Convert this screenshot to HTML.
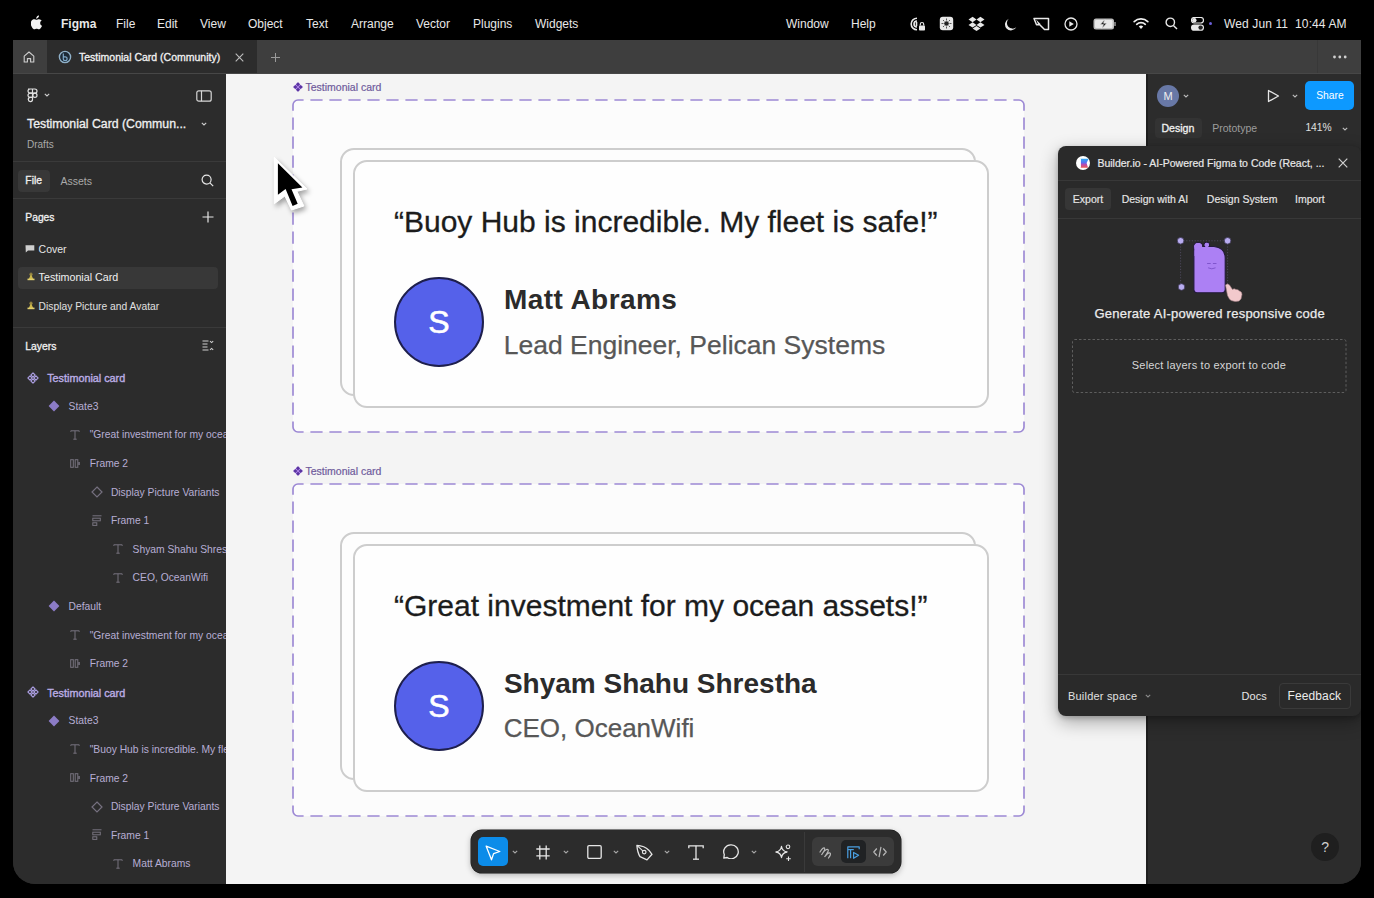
<!DOCTYPE html>
<html><head><meta charset="utf-8">
<style>
*{margin:0;padding:0;box-sizing:border-box}
html,body{width:1374px;height:898px;overflow:hidden;background:#000;font-family:"Liberation Sans",sans-serif}
.a{position:absolute;white-space:nowrap}
.a>svg{display:block}
#menubar .m{position:absolute;top:16.7px;font-size:12px;color:#e8e8e8;line-height:14px}
#win{position:absolute;left:13px;top:40px;width:1348px;height:844px;border-radius:0 0 22px 22px;overflow:hidden;background:#2c2c2c}
#tabbar{position:absolute;left:0;top:0;width:1348px;height:34px;background:#3e3e3e;border-bottom:1px solid #474747}
#sidebar{position:absolute;left:0;top:34px;width:213px;height:810px;background:#2c2c2c;overflow:hidden}
#canvas{position:absolute;left:213px;top:34px;width:920px;height:810px;background:#f4f4f4;overflow:hidden}
#rpanel{position:absolute;left:1133px;top:34px;width:215px;height:810px;background:#2c2c2c}
.sep{position:absolute;left:0;height:1px;background:#3a3a3a}
.st{position:absolute;font-size:10.5px;color:#e6e6e6;line-height:12px}
.lbl{position:absolute;left:67px;width:120px;height:14px;font-size:10.5px;line-height:14px;color:#6f5b9c;-webkit-text-stroke:0.2px #6f5b9c}
.frame{position:absolute;left:67px;width:731px;height:332px}
.card{position:absolute;border:2px solid #cdcdcd;border-radius:14px;background:#fdfdfd}
.back{left:114px;width:636px;height:248px}
.front{left:126.5px;width:636.5px;height:248.2px;background:#fefefe}
.avatar{position:absolute;left:168px;width:90px;height:90px;border-radius:50%;background:#5561ea;border:2px solid #1e1f4d;color:#fff;font-size:32px;line-height:87px;text-align:center;-webkit-text-stroke:0.6px #fff}
.quote{position:absolute;left:168px;margin-top:1px;font-size:30px;line-height:30px;color:#1c1c1c;white-space:nowrap;-webkit-text-stroke:0.3px #1c1c1c}
.name{position:absolute;left:277.9px;font-size:28px;line-height:28px;font-weight:700;color:#2b2b2b;white-space:nowrap}
.role{position:absolute;left:277.7px;font-size:26.5px;line-height:26px;color:#575757;white-space:nowrap;-webkit-text-stroke:0.25px #575757}
.ly{position:absolute;font-size:10.3px;line-height:12px;color:#b7aed4;white-space:nowrap}
.lyb{position:absolute;font-size:10.8px;line-height:12px;color:#bcaee6;white-space:nowrap;-webkit-text-stroke:0.35px #bcaee6}
#builder{position:absolute;left:1044.8px;top:105.6px;width:303.2px;height:570.4px;background:#2a2a2a;border-radius:8px;box-shadow:0 6px 18px rgba(0,0,0,0.32),0 2px 5px rgba(0,0,0,0.2)}
#toolbar{position:absolute;left:471.3px;top:830.4px;width:429.7px;height:42.4px;border-radius:11px;background:#2c2c2c;box-shadow:0 0 0 0.5px #1a1a1a,0 2px 6px rgba(0,0,0,0.28)}
.sb{-webkit-text-stroke:0.3px currentColor}
</style></head><body>
<div id="menubar">
  <svg class="a" style="left:31px;top:15px" width="12" height="15" viewBox="0 0 170 200"><path fill="#f2f2f2" d="M150.4 155.8c-2.8 6.4-6.1 12.3-9.9 17.8-5.2 7.4-9.5 12.6-12.8 15.4-5.1 4.7-10.6 7.1-16.5 7.3-4.2 0-9.3-1.2-15.3-3.7-6-2.4-11.4-3.6-16.4-3.6-5.3 0-10.9 1.2-16.9 3.6-6 2.5-10.9 3.7-14.5 3.9-5.7.2-11.3-2.3-16.9-7.5-3.6-3.1-8.1-8.5-13.4-16.1C11.8 164.8 7 155.4 3.2 144.5-.9 132.8-3 121.4-3 110.4c0-12.6 2.7-23.5 8.2-32.6 4.3-7.3 10-13.1 17.1-17.4 7.1-4.3 14.8-6.4 23.1-6.6 4.5 0 10.5 1.4 17.9 4.2 7.4 2.8 12.2 4.2 14.3 4.2 1.6 0 6.9-1.7 16-5 8.6-3.1 15.8-4.4 21.8-3.9 16.1 1.3 28.2 7.7 36.2 19.1-14.4 8.7-21.5 20.9-21.4 36.6.1 12.2 4.6 22.4 13.3 30.5 3.9 3.7 8.3 6.6 13.2 8.6-1.1 3.1-2.2 6.1-3.4 9zM113.5 3.8c0 9.6-3.5 18.5-10.5 26.8-8.4 9.8-18.6 15.5-29.6 14.6-.1-1.2-.2-2.4-.2-3.7 0-9.2 4-19.1 11.2-27.2 3.6-4.1 8.1-7.5 13.6-10.3 5.5-2.7 10.7-4.2 15.6-4.5.1 1.4.2 2.8.2 4.2z"/></svg>
  <svg class="a" style="left:909px;top:16px" width="17" height="16" viewBox="0 0 17 16"><g fill="none" stroke="#e8e8e8" stroke-width="1.6"><path d="M8 2.2A5.8 5.8 0 1 0 8 13.8"/><path d="M8 5A3 3 0 1 0 8 11"/></g><path d="M7.5 6V10" stroke="#e8e8e8" stroke-width="1.6"/><rect x="10" y="9.5" width="6" height="5" rx="0.8" fill="#e8e8e8"/><path d="M11.3 9.5V8.2A1.7 1.7 0 0 1 14.7 8.2V9.5" fill="none" stroke="#e8e8e8" stroke-width="1.2"/></svg>
  <svg class="a" style="left:939px;top:16px" width="15" height="15" viewBox="0 0 15 15"><rect x="0.8" y="0.8" width="13.4" height="13.4" rx="3" fill="#e8e8e8"/><circle cx="7.5" cy="7.5" r="2.3" fill="#222"/><g stroke="#333" stroke-width="0.8"><path d="M7.5 2.5V4.5M7.5 10.5V12.5M2.5 7.5H4.5M10.5 7.5H12.5M4 4L5.3 5.3M9.7 9.7L11 11M11 4L9.7 5.3M5.3 9.7L4 11"/></g></svg>
  <svg class="a" style="left:968px;top:16px" width="17" height="15" viewBox="0 0 17 15"><g fill="#e8e8e8"><path d="M4.6 0.8L0.5 3.5L4.6 6.2L8.5 3.5Z"/><path d="M12.4 0.8L8.5 3.5L12.4 6.2L16.5 3.5Z"/><path d="M0.5 8.9L4.6 11.6L8.5 8.9L4.6 6.2Z"/><path d="M8.5 8.9L12.4 11.6L16.5 8.9L12.4 6.2Z"/><path d="M4.6 12.5L8.5 15L12.4 12.5L8.5 9.9Z"/></g></svg>
  <svg class="a" style="left:1003.5px;top:17.5px" width="13" height="13" viewBox="0 0 13 13"><path d="M4.8 0.8A6 6 0 1 0 12.3 9.2A5.2 5.2 0 0 1 4.8 0.8Z" fill="#e8e8e8"/></svg>
  <svg class="a" style="left:1033px;top:17px" width="17" height="14" viewBox="0 0 17 14"><path d="M1 1.5H15.5V12.5H11.5L6.5 7.5L3.5 7.8Z" fill="none" stroke="#e8e8e8" stroke-width="1.5" stroke-linejoin="round"/><path d="M3 2.5L7.5 7L5.5 8Z" fill="#e8e8e8"/></svg>
  <svg class="a" style="left:1064px;top:17px" width="14" height="14" viewBox="0 0 14 14"><circle cx="7" cy="7" r="6" fill="none" stroke="#e8e8e8" stroke-width="1.3"/><path d="M5.3 4.2V9.8L9.8 7Z" fill="#e8e8e8"/></svg>
  <svg class="a" style="left:1093px;top:18px" width="24" height="12" viewBox="0 0 24 12"><rect x="0.5" y="0.5" width="20.5" height="11" rx="2.5" fill="#bdbdbd"/><rect x="2" y="2" width="17.5" height="8" rx="1.3" fill="#e8e8e8"/><path d="M22 4V8" stroke="#9a9a9a" stroke-width="1.5"/><path d="M11.8 1.5L7.2 6.6H10.4L9 10.5L13.8 5.2H10.6Z" fill="#222" stroke="#e8e8e8" stroke-width="0.6"/></svg>
  <svg class="a" style="left:1133px;top:17px" width="16" height="13" viewBox="0 0 16 13"><g fill="none" stroke="#f0f0f0" stroke-width="1.7" stroke-linecap="round"><path d="M1.2 4.6A10 10 0 0 1 14.8 4.6"/><path d="M3.7 7.3A6.4 6.4 0 0 1 12.3 7.3"/></g><path d="M5.8 9.6A3.2 3.2 0 0 1 10.2 9.6L8 12Z" fill="#f0f0f0"/></svg>
  <svg class="a" style="left:1165px;top:17px" width="13" height="13" viewBox="0 0 13 13"><g fill="none" stroke="#e8e8e8" stroke-width="1.4"><circle cx="5.3" cy="5.3" r="4.2"/><path d="M8.4 8.4L12 12"/></g></svg>
  <svg class="a" style="left:1190.5px;top:17px" width="13" height="14" viewBox="0 0 13 14"><rect x="0.5" y="0.5" width="12" height="5.5" rx="2.7" fill="none" stroke="#e8e8e8" stroke-width="1.2"/><circle cx="3.3" cy="3.25" r="2.2" fill="#e8e8e8"/><rect x="0" y="7.5" width="13" height="6.3" rx="3.1" fill="#e8e8e8"/><circle cx="9.6" cy="10.6" r="2.2" fill="#222"/></svg>
  <div class="a" style="left:1208.5px;top:21.5px;width:3.5px;height:3.5px;border-radius:50%;background:#6a5fd8"></div>

  <div class="m" style="left:61px;font-weight:700">Figma</div>
  <div class="m" style="left:116px">File</div>
  <div class="m" style="left:157px">Edit</div>
  <div class="m" style="left:200px">View</div>
  <div class="m" style="left:248px">Object</div>
  <div class="m" style="left:306px">Text</div>
  <div class="m" style="left:351px">Arrange</div>
  <div class="m" style="left:416px">Vector</div>
  <div class="m" style="left:473px">Plugins</div>
  <div class="m" style="left:535px">Widgets</div>
  <div class="m" style="left:786px">Window</div>
  <div class="m" style="left:851px">Help</div>
  <div class="m" style="left:1224px;letter-spacing:0.12px">Wed Jun 11&nbsp;&nbsp;10:44 AM</div>
</div>
<div id="win">
  <div id="tabbar">
    <div class="a" style="left:34px;top:0;width:210px;height:33px;background:#2c2c2c"></div>
    <svg class="a" style="left:9.5px;top:11px" width="12" height="12" viewBox="0 0 12 12"><path d="M1.2 11V5.2L6 1L10.8 5.2V11H7.6V7.6H4.4V11Z" fill="none" stroke="#cfcfcf" stroke-width="1.1" stroke-linejoin="round"/></svg>
    <svg class="a" style="left:44.5px;top:10px" width="14" height="14" viewBox="0 0 14 14"><circle cx="7" cy="7" r="5.6" fill="#1d2a36" stroke="#8fb0c8" stroke-width="1.4"/><path d="M5.3 3.6V8.8A1.9 1.9 0 1 0 7.2 6.9H5.3" fill="none" stroke="#7ea8c8" stroke-width="1.2"/></svg>
    <div class="a sb" style="left:66px;top:11px;font-size:10.5px;line-height:12px;color:#f2f2f2">Testimonial Card (Community)</div>
    <svg class="a" style="left:221.5px;top:12.5px" width="9" height="9" viewBox="0 0 9 9"><path d="M0.7 0.7L8.3 8.3M8.3 0.7L0.7 8.3" stroke="#bdbdbd" stroke-width="1.1"/></svg>
    <svg class="a" style="left:257.5px;top:12.5px" width="9" height="9" viewBox="0 0 9 9"><path d="M4.5 0V9M0 4.5H9" stroke="#9a9a9a" stroke-width="1"/></svg>
    <div class="a" style="left:1304px;top:0;width:1px;height:33px;background:#383838"></div>
    <svg class="a" style="left:1319px;top:15px" width="16" height="4" viewBox="0 0 16 4"><g fill="#d0d0d0"><circle cx="2.5" cy="2" r="1.4"/><circle cx="7.8" cy="2" r="1.4"/><circle cx="13.2" cy="2" r="1.4"/></g></svg>
  </div>
  <div id="sidebar">
    <svg class="a" style="left:14px;top:14px" width="11" height="15" viewBox="0 0 11 15"><g fill="none" stroke="#e0e0e0" stroke-width="1.2"><path d="M1 1H5.5V5.2H3.1A2.1 2.1 0 0 1 3.1 1Z M5.5 1H7.9A2.1 2.1 0 0 1 7.9 5.2H5.5Z"/><path d="M3.1 5.2H5.5V9.4H3.1A2.1 2.1 0 0 1 3.1 5.2Z"/><circle cx="7.9" cy="7.3" r="2.1"/><path d="M3.1 9.4H5.5V11.5A2.1 2.1 0 1 1 3.1 9.4Z"/></g></svg>
    <svg class="a" style="left:30.5px;top:19px" width="6" height="4" viewBox="0 0 6 4"><path d="M0.8 0.8L3 3L5.2 0.8" fill="none" stroke="#cfcfcf" stroke-width="1.1"/></svg>
    <svg class="a" style="left:183px;top:15.5px" width="16" height="12" viewBox="0 0 16 12"><g fill="none" stroke="#d6d6d6" stroke-width="1.2"><rect x="0.8" y="0.8" width="14.4" height="10.4" rx="2"/><path d="M5.5 0.8V11.2"/></g></svg>
    <div class="a sb" style="left:14px;top:44.3px;font-size:12.3px;line-height:12px;color:#f0f0f0">Testimonial Card (Commun...</div>
    <svg class="a" style="left:187.5px;top:48px" width="6" height="4" viewBox="0 0 6 4"><path d="M0.8 0.8L3 3L5.2 0.8" fill="none" stroke="#cfcfcf" stroke-width="1.1"/></svg>
    <div class="a" style="left:14px;top:65px;font-size:10px;line-height:12px;color:#a9a9a9">Drafts</div>
    <div class="sep" style="top:87px;width:213px"></div>
    <div class="a" style="left:4.5px;top:96px;width:32.5px;height:21.6px;border-radius:4px;background:#383838"></div>
    <div class="a sb" style="left:12.3px;top:101px;font-size:10.4px;line-height:12px;color:#f0f0f0">File</div>
    <div class="a" style="left:47.4px;top:101px;font-size:10.5px;line-height:12px;color:#a9a9a9">Assets</div>
    <svg class="a" style="left:188px;top:100px" width="13" height="13" viewBox="0 0 13 13"><g fill="none" stroke="#e6e6e6" stroke-width="1.2"><circle cx="5.6" cy="5.6" r="4.5"/><path d="M8.9 8.9L12.2 12.2"/></g></svg>
    <div class="sep" style="top:124.4px;width:213px"></div>
    <div class="a sb" style="left:12.3px;top:138px;font-size:10.3px;line-height:12px;color:#f0f0f0">Pages</div>
    <svg class="a" style="left:188.5px;top:137.4px" width="12" height="12" viewBox="0 0 12 12"><g stroke="#e6e6e6" stroke-width="1.2"><path d="M6 0.5V11.5M0.5 6H11.5"/></g></svg>
    <div class="a" style="left:12.3px;top:170px;width:10px;height:9px"><svg width="10" height="9" viewBox="0 0 10 9"><path d="M0.5 1.2H9.3V6.6H3L0.8 8.6Z" fill="#cfcfcf"/></svg></div>
    <div class="st" style="left:25.6px;top:168.5px;color:#e6e6e6">Cover</div>
    <div class="a" style="left:4.5px;top:193px;width:200px;height:21.5px;border-radius:4px;background:#383838"></div>
    <div class="a" style="left:12.5px;top:197px;width:10px;height:10px"><svg width="10" height="10" viewBox="0 0 10 10"><circle cx="5" cy="3.2" r="1.6" fill="#8f8040"/><path d="M5 3L7.6 9H2.4Z" fill="#cdb84a"/><rect x="1.5" y="7.6" width="7" height="1.6" fill="#e2d070"/></svg></div>
    <div class="st" style="left:25.6px;top:197.3px;color:#f0f0f0;font-size:10.7px">Testimonial Card</div>
    <div class="a" style="left:12.5px;top:225.5px;width:10px;height:10px"><svg width="10" height="10" viewBox="0 0 10 10"><circle cx="5" cy="3.2" r="1.6" fill="#8f8040"/><path d="M5 3L7.6 9H2.4Z" fill="#cdb84a"/><rect x="1.5" y="7.6" width="7" height="1.6" fill="#e2d070"/></svg></div>
    <div class="st" style="left:25.6px;top:227px;color:#e0e0e0;font-size:10.3px">Display Picture and Avatar</div>
    <div class="sep" style="top:253px;width:213px"></div>
    <div class="a sb" style="left:12.3px;top:266.5px;font-size:10.4px;line-height:12px;color:#f0f0f0">Layers</div>
    <svg class="a" style="left:189px;top:266px" width="12" height="11" viewBox="0 0 12 11"><g fill="none" stroke="#d0d0d0" stroke-width="1.1"><path d="M0.5 1H6.5M0.5 4H5.5M0.5 7H5.5M0.5 10H6.5"/><path d="M8 1.2L9.6 2.6L11.2 1.2M8 9.8L9.6 8.4L11.2 9.8"/></g></svg>
    <div class="a" style="left:13.7px;top:297.5px;width:12px;height:12px;line-height:0"><svg width="12" height="12" viewBox="0 0 12 12"><g fill="none" stroke="#aa9de0" stroke-width="1.1" stroke-linejoin="round"><path d="M6 0.9L8.1 3L6 5.1L3.9 3Z"/><path d="M6 6.9L8.1 9L6 11.1L3.9 9Z"/><path d="M0.9 6L3 3.9L5.1 6L3 8.1Z"/><path d="M6.9 6L9 3.9L11.1 6L9 8.1Z"/></g></svg></div><div class="lyb" style="left:34.2px;top:298.3px">Testimonial card</div><div class="a" style="left:34.6px;top:326.1px;width:12px;height:12px;line-height:0"><svg width="12" height="12" viewBox="0 0 12 12"><path d="M6 0.6L11.4 6L6 11.4L0.6 6Z" fill="#8c7cc6"/></svg></div><div class="ly" style="left:55.6px;top:326.7px">State3</div><div class="a" style="left:57.3px;top:355.7px;width:10px;height:10px;line-height:0"><svg width="10" height="10" viewBox="0 0 10 10"><g fill="none" stroke="#77737f" stroke-width="1"><path d="M0.8 1.8V0.8H9.2V1.8"/><path d="M5 0.8V9.2"/><path d="M3.3 9.2H6.7"/></g></svg></div><div class="ly" style="left:76.7px;top:355.3px">"Great investment for my ocean assets!"</div><div class="a" style="left:57.3px;top:384.8px;width:10px;height:9px;line-height:0"><svg width="10" height="9" viewBox="0 0 10 9"><g fill="none" stroke="#77737f" stroke-width="1"><rect x="0.7" y="0.7" width="2.6" height="7.6"/><rect x="5.2" y="0.7" width="2.6" height="7.6"/></g><rect x="8.3" y="3" width="1.5" height="3" fill="#77737f"/></svg></div><div class="ly" style="left:76.7px;top:383.9px">Frame 2</div><div class="a" style="left:77.8px;top:411.9px;width:12px;height:12px;line-height:0"><svg width="12" height="12" viewBox="0 0 12 12"><path d="M6 1L11 6L6 11L1 6Z" fill="none" stroke="#75707f" stroke-width="1.2"/></svg></div><div class="ly" style="left:97.9px;top:412.5px">Display Picture Variants</div><div class="a" style="left:78.8px;top:440.5px;width:10px;height:12px;line-height:0"><svg width="10" height="12" viewBox="0 0 10 12"><g fill="none" stroke="#77737f" stroke-width="1"><path d="M0.5 0.8H9.5"/><rect x="0.8" y="3.2" width="7.5" height="2.6"/><rect x="0.8" y="7.8" width="4" height="2.6"/></g></svg></div><div class="ly" style="left:97.9px;top:441.1px">Frame 1</div><div class="a" style="left:100.3px;top:470.1px;width:10px;height:10px;line-height:0"><svg width="10" height="10" viewBox="0 0 10 10"><g fill="none" stroke="#77737f" stroke-width="1"><path d="M0.8 1.8V0.8H9.2V1.8"/><path d="M5 0.8V9.2"/><path d="M3.3 9.2H6.7"/></g></svg></div><div class="ly" style="left:119.6px;top:469.7px">Shyam Shahu Shrestha</div><div class="a" style="left:100.3px;top:498.7px;width:10px;height:10px;line-height:0"><svg width="10" height="10" viewBox="0 0 10 10"><g fill="none" stroke="#77737f" stroke-width="1"><path d="M0.8 1.8V0.8H9.2V1.8"/><path d="M5 0.8V9.2"/><path d="M3.3 9.2H6.7"/></g></svg></div><div class="ly" style="left:119.6px;top:498.3px">CEO, OceanWifi</div><div class="a" style="left:34.6px;top:526.3px;width:12px;height:12px;line-height:0"><svg width="12" height="12" viewBox="0 0 12 12"><path d="M6 0.6L11.4 6L6 11.4L0.6 6Z" fill="#8c7cc6"/></svg></div><div class="ly" style="left:55.6px;top:526.9px">Default</div><div class="a" style="left:57.3px;top:555.9px;width:10px;height:10px;line-height:0"><svg width="10" height="10" viewBox="0 0 10 10"><g fill="none" stroke="#77737f" stroke-width="1"><path d="M0.8 1.8V0.8H9.2V1.8"/><path d="M5 0.8V9.2"/><path d="M3.3 9.2H6.7"/></g></svg></div><div class="ly" style="left:76.7px;top:555.5px">"Great investment for my ocean assets!"</div><div class="a" style="left:57.3px;top:585.0px;width:10px;height:9px;line-height:0"><svg width="10" height="9" viewBox="0 0 10 9"><g fill="none" stroke="#77737f" stroke-width="1"><rect x="0.7" y="0.7" width="2.6" height="7.6"/><rect x="5.2" y="0.7" width="2.6" height="7.6"/></g><rect x="8.3" y="3" width="1.5" height="3" fill="#77737f"/></svg></div><div class="ly" style="left:76.7px;top:584.1px">Frame 2</div><div class="a" style="left:13.7px;top:612.1px;width:12px;height:12px;line-height:0"><svg width="12" height="12" viewBox="0 0 12 12"><g fill="none" stroke="#aa9de0" stroke-width="1.1" stroke-linejoin="round"><path d="M6 0.9L8.1 3L6 5.1L3.9 3Z"/><path d="M6 6.9L8.1 9L6 11.1L3.9 9Z"/><path d="M0.9 6L3 3.9L5.1 6L3 8.1Z"/><path d="M6.9 6L9 3.9L11.1 6L9 8.1Z"/></g></svg></div><div class="lyb" style="left:34.2px;top:612.9px">Testimonial card</div><div class="a" style="left:34.6px;top:640.7px;width:12px;height:12px;line-height:0"><svg width="12" height="12" viewBox="0 0 12 12"><path d="M6 0.6L11.4 6L6 11.4L0.6 6Z" fill="#8c7cc6"/></svg></div><div class="ly" style="left:55.6px;top:641.3px">State3</div><div class="a" style="left:57.3px;top:670.3px;width:10px;height:10px;line-height:0"><svg width="10" height="10" viewBox="0 0 10 10"><g fill="none" stroke="#77737f" stroke-width="1"><path d="M0.8 1.8V0.8H9.2V1.8"/><path d="M5 0.8V9.2"/><path d="M3.3 9.2H6.7"/></g></svg></div><div class="ly" style="left:76.7px;top:669.9px">"Buoy Hub is incredible. My fleet is safe!"</div><div class="a" style="left:57.3px;top:699.4px;width:10px;height:9px;line-height:0"><svg width="10" height="9" viewBox="0 0 10 9"><g fill="none" stroke="#77737f" stroke-width="1"><rect x="0.7" y="0.7" width="2.6" height="7.6"/><rect x="5.2" y="0.7" width="2.6" height="7.6"/></g><rect x="8.3" y="3" width="1.5" height="3" fill="#77737f"/></svg></div><div class="ly" style="left:76.7px;top:698.5px">Frame 2</div><div class="a" style="left:77.8px;top:726.5px;width:12px;height:12px;line-height:0"><svg width="12" height="12" viewBox="0 0 12 12"><path d="M6 1L11 6L6 11L1 6Z" fill="none" stroke="#75707f" stroke-width="1.2"/></svg></div><div class="ly" style="left:97.9px;top:727.1px">Display Picture Variants</div><div class="a" style="left:78.8px;top:755.1px;width:10px;height:12px;line-height:0"><svg width="10" height="12" viewBox="0 0 10 12"><g fill="none" stroke="#77737f" stroke-width="1"><path d="M0.5 0.8H9.5"/><rect x="0.8" y="3.2" width="7.5" height="2.6"/><rect x="0.8" y="7.8" width="4" height="2.6"/></g></svg></div><div class="ly" style="left:97.9px;top:755.7px">Frame 1</div><div class="a" style="left:100.3px;top:784.7px;width:10px;height:10px;line-height:0"><svg width="10" height="10" viewBox="0 0 10 10"><g fill="none" stroke="#77737f" stroke-width="1"><path d="M0.8 1.8V0.8H9.2V1.8"/><path d="M5 0.8V9.2"/><path d="M3.3 9.2H6.7"/></g></svg></div><div class="ly" style="left:119.6px;top:784.3px">Matt Abrams</div>
  </div>
  <div id="canvas">
    <div class="lbl" style="top:6px"><svg width="10" height="10" viewBox="0 0 10 10" style="position:absolute;left:0;top:2px"><path d="M5 0.2L9.8 5L5 9.8L0.2 5Z" fill="#b98cf0"/><g fill="#5a35a0"><path d="M5 0.2L7.1 2.3L5 4.4L2.9 2.3Z"/><path d="M5 5.6L7.1 7.7L5 9.8L2.9 7.7Z"/><path d="M0.2 5L2.3 2.9L4.4 5L2.3 7.1Z"/><path d="M5.6 5L7.7 2.9L9.8 5L7.7 7.1Z"/></g></svg><span style="position:absolute;left:12.5px;top:0">Testimonial card</span></div>
    <div class="frame" style="top:26px"><svg width="733" height="334" style="position:absolute;left:-1px;top:-1px" viewBox="-1 -1 733 334"><rect x="0" y="0" width="731" height="332" rx="5" fill="#fcfcfc"/><g fill="none" stroke="#9c88d4" stroke-width="1.65"><path d="M5 0H726M5 332H726" stroke-dasharray="12.2 6.8" stroke-dashoffset="6.6"/><path d="M0 5V327M731 5V327" stroke-dasharray="12.2 6.8" stroke-dashoffset="6.5"/><path d="M0 5A5 5 0 0 1 5 0M726 0A5 5 0 0 1 731 5M731 327A5 5 0 0 1 726 332M5 332A5 5 0 0 1 0 327"/></g></svg></div>
    <div class="card back" style="top:73.6px"></div>
    <div class="card front" style="top:85.8px"></div>
    <div class="avatar" style="top:202.8px">S</div>

    <div class="quote" style="top:132px">“Buoy Hub is incredible. My fleet is safe!”</div>
    <div class="name" style="top:212px;letter-spacing:0.45px">Matt Abrams</div>
    <div class="role" style="top:258px">Lead Engineer, Pelican Systems</div>

    <div class="lbl" style="top:390px"><svg width="10" height="10" viewBox="0 0 10 10" style="position:absolute;left:0;top:2px"><path d="M5 0.2L9.8 5L5 9.8L0.2 5Z" fill="#b98cf0"/><g fill="#5a35a0"><path d="M5 0.2L7.1 2.3L5 4.4L2.9 2.3Z"/><path d="M5 5.6L7.1 7.7L5 9.8L2.9 7.7Z"/><path d="M0.2 5L2.3 2.9L4.4 5L2.3 7.1Z"/><path d="M5.6 5L7.7 2.9L9.8 5L7.7 7.1Z"/></g></svg><span style="position:absolute;left:12.5px;top:0">Testimonial card</span></div>
    <div class="frame" style="top:410px"><svg width="733" height="334" style="position:absolute;left:-1px;top:-1px" viewBox="-1 -1 733 334"><rect x="0" y="0" width="731" height="332" rx="5" fill="#fcfcfc"/><g fill="none" stroke="#9c88d4" stroke-width="1.65"><path d="M5 0H726M5 332H726" stroke-dasharray="12.2 6.8" stroke-dashoffset="6.6"/><path d="M0 5V327M731 5V327" stroke-dasharray="12.2 6.8" stroke-dashoffset="6.5"/><path d="M0 5A5 5 0 0 1 5 0M726 0A5 5 0 0 1 731 5M731 327A5 5 0 0 1 726 332M5 332A5 5 0 0 1 0 327"/></g></svg></div>
    <div class="card back" style="top:457.6px"></div>
    <div class="card front" style="top:469.8px"></div>
    <div class="avatar" style="top:586.8px">S</div>

    <div class="quote" style="top:516px">“Great investment for my ocean assets!”</div>
    <div class="name" style="top:596px">Shyam Shahu Shrestha</div>
    <div class="role" style="top:641px;font-size:26px">CEO, OceanWifi</div>
  </div>
  <div id="rpanel">
    <div class="a" style="left:0;top:0;width:1.5px;height:810px;background:#1e1e1e"></div>
    <div class="a" style="left:11px;top:10.5px;width:22px;height:22px;border-radius:50%;background:#6878a6;color:#f0f0f0;font-size:11px;line-height:22px;text-align:center">M</div>
    <svg class="a" style="left:37px;top:19.5px" width="6" height="4" viewBox="0 0 6 4"><path d="M0.8 0.8L3 3L5.2 0.8" fill="none" stroke="#bdbdbd" stroke-width="1.1"/></svg>
    <svg class="a" style="left:121px;top:15px" width="13" height="14" viewBox="0 0 13 14"><path d="M1.5 1.5V12.5L11.5 7Z" fill="none" stroke="#e6e6e6" stroke-width="1.3" stroke-linejoin="round"/></svg>
    <svg class="a" style="left:145.5px;top:19.5px" width="6" height="4" viewBox="0 0 6 4"><path d="M0.8 0.8L3 3L5.2 0.8" fill="none" stroke="#bdbdbd" stroke-width="1.1"/></svg>
    <div class="a" style="left:159.4px;top:7px;width:49px;height:28.6px;border-radius:5px;background:#0d99ff;color:#fff;font-size:10.3px;line-height:30.4px;text-align:center">Share</div>
    <div class="a" style="left:9px;top:44px;width:46.5px;height:19.7px;border-radius:4px;background:#333333"></div>
    <div class="a sb" style="left:15.4px;top:47.8px;font-size:10.6px;line-height:12px;color:#f0f0f0">Design</div>
    <div class="a" style="left:66.2px;top:47.6px;font-size:10.5px;line-height:12px;color:#9c9c9c">Prototype</div>
    <div class="a" style="left:159.4px;top:47.8px;font-size:10.3px;line-height:12px;color:#e0e0e0">141%</div>
    <svg class="a" style="left:196px;top:52.5px" width="6" height="4" viewBox="0 0 6 4"><path d="M0.8 0.8L3 3L5.2 0.8" fill="none" stroke="#bdbdbd" stroke-width="1.1"/></svg>
  </div>
  <div id="builder">
    <div class="a" style="left:17.8px;top:10.4px;width:14px;height:14px;border-radius:50%;background:#fff;overflow:hidden"><svg width="14" height="14" viewBox="0 0 14 14"><defs><linearGradient id="bg1" x1="0" y1="0" x2="0" y2="1"><stop offset="0" stop-color="#2fa8f0"/><stop offset="0.45" stop-color="#5a6cf0"/><stop offset="0.6" stop-color="#b04ab8"/><stop offset="1" stop-color="#f05a50"/></linearGradient></defs><path d="M4.2 2.8H12.6L10.6 7L12 11.8H4.2Z" fill="url(#bg1)"/><path d="M4.2 2.8V11.8" stroke="#fff" stroke-width="1.4"/></svg></div>
    <div class="a sb" style="left:39.6px;top:11.5px;font-size:10.5px;line-height:12px;color:#e8e8e8;-webkit-text-stroke-width:0.2px">Builder.io - AI-Powered Figma to Code (React, ...</div>
    <svg class="a" style="left:280px;top:12.4px" width="10" height="10" viewBox="0 0 10 10"><path d="M0.7 0.7L9.3 9.3M9.3 0.7L0.7 9.3" stroke="#d0d0d0" stroke-width="1.2"/></svg>
    <div class="sep" style="top:34.9px;width:303px;background:#383838"></div>
    <div class="a" style="left:7.2px;top:42.7px;width:46.4px;height:21.7px;border-radius:4px;background:#363636"></div>
    <div class="a" style="left:15px;top:47.6px;font-size:10.5px;line-height:12px;color:#e6e6e6;-webkit-text-stroke:0.15px #e6e6e6">Export</div>
    <div class="a" style="left:63.9px;top:47.6px;font-size:10.5px;line-height:12px;color:#e6e6e6;-webkit-text-stroke:0.15px #e6e6e6">Design with AI</div>
    <div class="a" style="left:149px;top:47.6px;font-size:10.5px;line-height:12px;color:#e6e6e6;-webkit-text-stroke:0.15px #e6e6e6">Design System</div>
    <div class="a" style="left:237.2px;top:47.6px;font-size:10.5px;line-height:12px;color:#e6e6e6;-webkit-text-stroke:0.15px #e6e6e6">Import</div>
    <div class="sep" style="top:72.4px;width:303px;background:#383838"></div>
    <svg class="a" style="left:115px;top:88px" width="74" height="70" viewBox="0 0 74 70">
      <g fill="none" stroke="#5a5470" stroke-width="0.7" stroke-dasharray="1.2 1.6"><path d="M7.6 6.8H54.6"/><path d="M7.6 6.8V53"/><path d="M54.6 6.8V50"/></g>
      <g fill="#ac80f4" stroke="#231a3a" stroke-width="1.1"><circle cx="25.2" cy="13" r="4.6"/><circle cx="33.8" cy="11" r="2.8"/><path d="M20.9 17Q20.9 13 25 12.5L41 12.5Q52.2 13.5 52.2 24V55.7Q52.2 58.7 49.2 58.7H23.9Q20.9 58.7 20.9 55.7Z"/></g>
      <g fill="#ac80f4"><circle cx="25.2" cy="13" r="4"/><circle cx="33.8" cy="11" r="2.2"/><rect x="21.5" y="14" width="20" height="8"/></g>
      <g fill="none" stroke="#7a50c8" stroke-width="0.9" stroke-linecap="round"><path d="M34.5 29.5H37.3M40.3 29.5H43.1"/><path d="M35.5 34Q38.8 35.8 42.2 34"/></g>
      <g fill="#b8acf0" stroke="#3a3550" stroke-width="0.8"><circle cx="7.6" cy="6.8" r="3.3"/><circle cx="54.6" cy="6.8" r="3.3"/><circle cx="8.5" cy="53" r="3.3"/></g>
      <path d="M52.5 51Q54.5 49 56.5 51L59.5 55.5Q61 54 63 55.5Q65 55 66.5 57Q69 57.5 69 60.5L68 65Q66.5 68 62 67.5L58 66.5Q56 65 54.5 61.5Z" fill="#f2c9cc" stroke="#9c7b80" stroke-width="0.6"/>
    </svg>
    <div class="a sb" style="left:36.6px;top:161.6px;font-size:13px;line-height:14px;color:#ececec;letter-spacing:0.25px;-webkit-text-stroke-width:0.25px">Generate AI-powered responsive code</div>
    <svg class="a" style="left:14.2px;top:193px" width="275" height="55" viewBox="0 0 275 55"><rect x="0.5" y="0.5" width="273.5" height="53" rx="2" fill="none" stroke="#5e5e5e" stroke-width="1" stroke-dasharray="2.5 2"/></svg>
    <div class="a" style="left:74px;top:213.8px;font-size:11px;line-height:12px;color:#d6d6d6;letter-spacing:0.2px">Select layers to export to code</div>
    <div class="sep" style="top:528.9px;width:303px;background:#383838"></div>
    <div class="a" style="left:10.2px;top:544.5px;font-size:11px;line-height:12px;color:#e0e0e0;letter-spacing:0.2px">Builder space</div>
    <svg class="a" style="left:87.5px;top:548.5px" width="6" height="4" viewBox="0 0 6 4"><path d="M0.8 0.8L3 3L5.2 0.8" fill="none" stroke="#8a8a8a" stroke-width="1.1"/></svg>
    <div class="a" style="left:183.8px;top:544.5px;font-size:11px;line-height:12px;color:#e6e6e6">Docs</div>
    <div class="a" style="left:221.2px;top:537.4px;width:71.8px;height:26.5px;border-radius:4px;border:1px solid #3a3a3a"></div>
    <div class="a" style="left:229.8px;top:544px;font-size:12px;line-height:12px;color:#ececec;letter-spacing:0.1px">Feedback</div>
  </div>
  <div class="a" style="left:1298.2px;top:793.4px;width:28px;height:28px;border-radius:50%;background:#1f1f1f;color:#cfcfcf;font-size:14px;line-height:28px;text-align:center">?</div>
</div>

<div id="toolbar">
  <div class="a" style="left:6.4px;top:6.9px;width:29.9px;height:29.1px;border-radius:5px;background:#0c8ce9"></div>
  <svg class="a" style="left:13.4px;top:14.4px" width="16" height="16" viewBox="0 0 16 16"><path d="M1.2 1.2L14.8 6.5L8.6 8.6L6.5 14.8Z" fill="none" stroke="#fff" stroke-width="1.3" stroke-linejoin="round"/></svg>
  <svg class="a" style="left:40.5px;top:19.6px" width="6" height="4" viewBox="0 0 6 4"><path d="M0.8 0.8L3 3L5.2 0.8" fill="none" stroke="#a8a8a8" stroke-width="1.1"/></svg>
  <svg class="a" style="left:65.2px;top:14.4px" width="14" height="15" viewBox="0 0 14 15"><g stroke="#e6e6e6" stroke-width="1.3"><path d="M3.8 0.5V14.5M10.2 0.5V14.5M0.3 4H13.7M0.3 10.8H13.7"/></g></svg>
  <svg class="a" style="left:91.3px;top:19.6px" width="6" height="4" viewBox="0 0 6 4"><path d="M0.8 0.8L3 3L5.2 0.8" fill="none" stroke="#a8a8a8" stroke-width="1.1"/></svg>
  <svg class="a" style="left:115.6px;top:14.4px" width="15" height="14" viewBox="0 0 15 14"><rect x="0.8" y="0.7" width="13.4" height="12.6" rx="1.2" fill="none" stroke="#e6e6e6" stroke-width="1.3"/></svg>
  <svg class="a" style="left:141.9px;top:19.6px" width="6" height="4" viewBox="0 0 6 4"><path d="M0.8 0.8L3 3L5.2 0.8" fill="none" stroke="#a8a8a8" stroke-width="1.1"/></svg>
  <svg class="a" style="left:165.2px;top:13.3px" width="18" height="18" viewBox="0 0 18 18"><path d="M0.9 1.4Q8.5 1.8 12.8 6.2L16 10.3L11 15.9L4 12.6Q1.4 8.5 0.9 1.4Z" fill="none" stroke="#e6e6e6" stroke-width="1.3" stroke-linejoin="round"/><circle cx="8.2" cy="8.1" r="1.8" fill="none" stroke="#e6e6e6" stroke-width="1.2"/><path d="M1.2 1.7L6.8 6.9" stroke="#e6e6e6" stroke-width="1.1"/></svg>
  <svg class="a" style="left:193px;top:19.6px" width="6" height="4" viewBox="0 0 6 4"><path d="M0.8 0.8L3 3L5.2 0.8" fill="none" stroke="#a8a8a8" stroke-width="1.1"/></svg>
  <svg class="a" style="left:216.9px;top:14.8px" width="16" height="15" viewBox="0 0 16 15"><g fill="none" stroke="#e6e6e6" stroke-width="1.3"><path d="M0.8 3.2V0.8H15.2V3.2"/><path d="M8 0.8V14.2"/><path d="M5 14.2H11"/></g></svg>
  <svg class="a" style="left:252.1px;top:14px" width="16" height="15" viewBox="0 0 16 15"><path d="M8 0.8A7 7 0 1 1 4.2 13.5L0.8 14.2L1.3 10.6A7 7 0 0 1 8 0.8Z" fill="none" stroke="#e6e6e6" stroke-width="1.3" stroke-linejoin="round"/></svg>
  <svg class="a" style="left:279.7px;top:19.6px" width="6" height="4" viewBox="0 0 6 4"><path d="M0.8 0.8L3 3L5.2 0.8" fill="none" stroke="#a8a8a8" stroke-width="1.1"/></svg>
  <svg class="a" style="left:302.4px;top:13.2px" width="18" height="18" viewBox="0 0 18 18"><path d="M7.5 2.5Q8.3 7.2 13 8Q8.3 8.8 7.5 13.5Q6.7 8.8 2 8Q6.7 7.2 7.5 2.5Z" fill="none" stroke="#e6e6e6" stroke-width="1.3" stroke-linejoin="round"/><circle cx="14" cy="2.8" r="1.8" fill="none" stroke="#e6e6e6" stroke-width="1.1"/><path d="M14.5 12.5V17M12.2 14.8H16.8" stroke="#e6e6e6" stroke-width="1.1"/></svg>
  <div class="a" style="left:332.8px;top:1.6px;width:1px;height:40px;background:#3a3a3a"></div>
  <div class="a" style="left:340.5px;top:7.1px;width:82.7px;height:28.5px;border-radius:6px;background:#3b3b3b"></div>
  <div class="a" style="left:370px;top:9.9px;width:24.6px;height:22.9px;border-radius:5px;background:#202224"></div>
  <svg class="a" style="left:347.5px;top:15.5px" width="14" height="13" viewBox="0 0 14 13"><path d="M1 6Q4 1 5.5 2Q6.5 3 2.5 9Q6 3 9 3.5Q10.5 4.5 5.5 11Q9 6.5 11 7Q12.5 8 9.5 12" fill="none" stroke="#b8b8b8" stroke-width="1.2" stroke-linecap="round"/></svg>
  <svg class="a" style="left:376.2px;top:15.3px" width="13" height="13" viewBox="0 0 13 13"><g fill="none" stroke="#4a9fe0" stroke-width="1.2" stroke-linejoin="round"><path d="M0.8 12.2V0.8H12.2V3.2"/><path d="M0.8 3.6H6.8"/><path d="M3.6 3.6V12.2"/><path d="M6.6 6.4V12.3L11.6 9.3Z"/></g></svg>
  <svg class="a" style="left:401.6px;top:16px" width="14" height="12" viewBox="0 0 14 12"><g fill="none" stroke="#b8b8b8" stroke-width="1.2" stroke-linejoin="round"><path d="M3.8 2.5L0.8 6L3.8 9.5M10.2 2.5L13.2 6L10.2 9.5M8 0.8L6 11.2"/></g></svg>
</div>
<svg class="a" style="left:262px;top:148px;filter:drop-shadow(2px 3px 2.5px rgba(0,0,0,0.35))" width="56" height="72" viewBox="262 148 56 72"><path d="M274.3 157.4V203.7L284.9 196L291.5 210L303.9 206L296.9 191.3L307 189Z" fill="#fff" stroke="#fff" stroke-width="1" stroke-linejoin="round"/><path d="M277.9 163.2V194.8L285.6 189L292.6 206L297.7 203.7L291.5 189.3L302.4 187.4Z" fill="#000"/></svg>
</body></html>
